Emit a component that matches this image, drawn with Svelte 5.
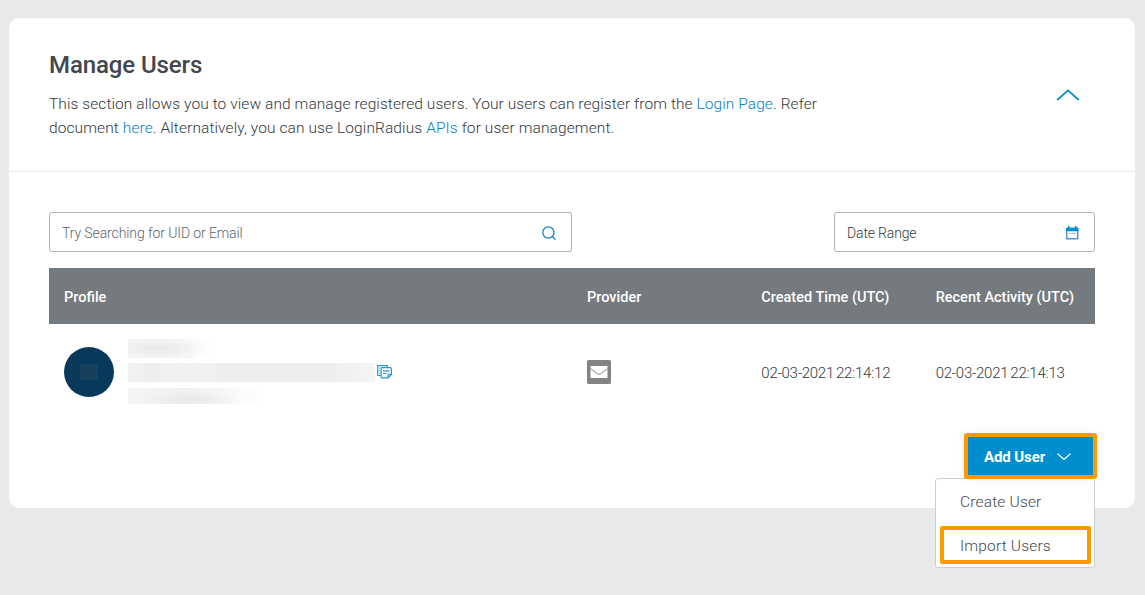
<script>
  const columns = ['Profile', 'Provider', 'Created Time (UTC)', 'Recent Activity (UTC)'];
  const user = { created: ['02-03-2021', '22:14:12'], activity: ['02-03-2021', '22:14:13'] };
</script>

<main class="page">
  <section class="card">
    <header class="head">
      <div class="intro">
        <h1>Manage Users</h1>
        <p>
          <span class="line first">This section allows you to view and manage registered users. Your users can register from the <a href="#login">Login Page</a>. Refer</span>
          <span class="line second">document <a href="#doc">here</a>. Alternatively, you can use LoginRadius <a href="#api">APIs</a> for user management.</span>
        </p>
      </div>
      <svg class="collapse" width="24" height="14" viewBox="0 0 24 14" fill="none" stroke="#008ecf" stroke-width="1.7"><path d="M1.2 12 12 2.4 22.8 12" /></svg>
    </header>

    <div class="body">
      <div class="filters">
        <div class="field search">
          <span class="placeholder">Try Searching for UID or Email</span>
          <svg width="14" height="14" viewBox="0 0 14 14" fill="none" stroke="#1583cb" stroke-width="1.3"><circle cx="6.4" cy="6.5" r="5.6" /><path d="m10.4 10.5 3.1 3.1" /></svg>
        </div>
        <div class="field date">
          <span class="range">Date Range</span>
          <svg width="13" height="14" viewBox="0 0 13 14"><path d="M.75 4v8.750h11V4" fill="#fff" stroke="#4f97d7" stroke-width="1.500" /><path fill="#008ecf" d="M0 2.500Q0 1.500 1 1.500h1V0h1.500v1.500H9V0h1.500v1.500h1q1 0 1 1V5.200H0z" /><path d="M3 7.500h1.500M5.500 7.500H7M8 7.500h1.500" stroke="#6aa7dc" /></svg>
        </div>
      </div>

      <div class="grid thead">
        {#each columns as column}
          <div class="cell">{column}</div>
        {/each}
      </div>
      <div class="grid row">
        <div class="cell profile">
          <div class="avatar"><i></i></div>
          <div class="details">
            <i class="mask name"></i>
            <div class="mail">
              <i class="mask email"></i>
              <svg width="15" height="14" viewBox="0 0 15 14" fill="none" stroke="#2499d3" stroke-width="1.2"><path d="M4 10.500H1.500q-1 0-1-1V.6h9.800V2" /><path d="M.5 3h3M.5 5.500h3M.5 8h3" stroke="#6bbbe3" stroke-width="1" /><path fill="#fff" d="M5 2.600h8.500q.9 0 .9.900v6l-3.200 3.400H5q-.9 0-.9-.9V3.500q0-.9.900-.9z" /><path d="M14.400 9.300h-3.200v3.500M6 5.800h6.500M6 8.500h3.500" /></svg>
            </div>
            <i class="mask uid"></i>
          </div>
        </div>
        <div class="cell provider">
          <svg width="24" height="24" viewBox="0 0 24 24"><rect width="24" height="24" rx="1.500" fill="#838383" /><path fill="#fff" d="M3.500 6h17v12h-17z" /><path d="m3.500 8.500 6.800 5.200q1.700 1.300 3.400 0l6.800-5.200" fill="none" stroke="#898989" stroke-width="1" /></svg>
        </div>
        {#each [user.created, user.activity] as [day, time]}
          <div class="cell stamp"><span>{day}</span><span>{time}</span></div>
        {/each}
      </div>

      <div class="actions">
        <button class="add">
          <span>Add User</span>
          <svg width="14" height="8" viewBox="0 0 14 8" fill="none" stroke="#fff" stroke-width="1.3"><path d="m.6.8 6.400 5.600L13.400.8" /></svg>
        </button>
        <div class="menu">
          <div class="item create"><span>Create User</span></div>
          <div class="item import"><span>Import Users</span></div>
        </div>
      </div>
    </div>
  </section>
</main>

<style>
  :global(body) { background: #e8e9eb; }
  .page { box-sizing: border-box; height: 595px; padding: 18px 10px 0 9px; overflow: hidden; font-family: Roboto, sans-serif; color: #33383c; }
  .page * { box-sizing: border-box; }
  .card { height: 490px; background: #fff; border-radius: 10px; }
  .head { display: flex; justify-content: space-between; height: 154px; padding: 31px 55px 0 40px; border-bottom: 1px solid #e6e7e9; }
  h1 { margin: 0; font-size: 24px; line-height: 32px; font-weight: 500; color: #40474d; letter-spacing: -0.1px; white-space: nowrap; }
  p { margin: 11px 0 0; font-size: 15.5px; line-height: 24px; font-weight: 300; }
  .line { display: block; white-space: nowrap; }
  .first { letter-spacing: 0.08px; }
  .second { letter-spacing: 0.1px; }
  a { color: #0082c6; text-decoration: none; }
  .collapse { margin-top: 39px; }
  .body { padding: 40px 40px 0; }
  .filters { display: flex; justify-content: space-between; height: 40px; margin-bottom: 16px; }
  .field { display: flex; align-items: center; justify-content: space-between; border: 1px solid #b0b2b4; border-radius: 3px; padding-top: 2px; font-size: 14px; white-space: nowrap; }
  .search { width: 523px; padding-left: 12px; padding-right: 15px; color: #5d6469; font-weight: 300; }
  .placeholder { letter-spacing: -0.1px; }
  .date { width: 261px; padding-left: 12px; padding-right: 15px; font-weight: 300; }
  .range { letter-spacing: -0.15px; }
  .grid { display: grid; grid-template-columns: 3fr 1fr 1fr 1fr; }
  .thead { height: 56px; background: #757a7e; color: #fff; font-size: 14.5px; font-weight: 500; }
  .cell { display: flex; align-items: center; min-width: 0; padding-left: 15px; white-space: nowrap; }
  .thead .cell { padding-top: 2px; }
  .row { height: 96px; }
  .profile { gap: 14px; }
  .avatar { display: flex; align-items: center; justify-content: center; width: 50px; height: 50px; border-radius: 50%; background: #09395a; }
  .avatar i { width: 18px; height: 16px; background: #15415f; }
  .details { height: 66px; }
  .mask { display: block; }
  .name { width: 84px; height: 19px; background: radial-gradient(ellipse at 35% 50%, #e8e9e9, transparent 65%), linear-gradient(90deg, #f4f4f4 55%, #fff); }
  .mail { display: flex; margin: 5px 0 6px; gap: 2px; }
  .mail svg { margin-top: 2px; }
  .email { width: 247px; height: 19px; background: linear-gradient(90deg, #f2f2f2, #eee 10%, #f1f1f1 22%, #ededed 50%, #efefef 85%, #f5f5f5); }
  .uid { width: 135px; height: 16px; background: radial-gradient(ellipse at 46% 70%, #e7e8e8, transparent 48%), linear-gradient(90deg, #f5f5f5, #f0f0f0 45%, #fff); }
  .stamp { font-size: 15px; font-weight: 300; padding-top: 2px; gap: 2px; letter-spacing: -0.25px; }
  .actions { display: flex; justify-content: flex-end; position: relative; margin: 13px -2px 0 0; }
  .add { display: flex; align-items: center; width: 133px; height: 46px; padding: 1px 0 0 16px; border: 4px solid #f90; border-radius: 3px; background: #008ecf; color: #fff; font: 700 15px Roboto, sans-serif; letter-spacing: -0.1px; gap: 12px; white-space: nowrap; z-index: 2; box-shadow: 0 0 8px #0001; }
  .add span { width: 61px; }
  .menu { position: absolute; top: 45px; right: 2px; width: 160px; height: 90px; padding: 4px; border: 1px solid #ccced0; border-radius: 3px; background: #fff; font-size: 15.5px; font-weight: 300; color: #43494e; letter-spacing: 0.18px; }
  .item { display: flex; align-items: center; height: 38px; padding-left: 20px; white-space: nowrap; }
  .import { margin-top: 5px; margin-right: -1px; border: 4px solid #f90; border-radius: 2px; padding-left: 16px; padding-top: 2px; }
</style>
